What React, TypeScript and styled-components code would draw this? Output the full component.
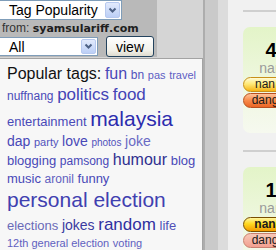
import styled, { createGlobalStyle } from "styled-components";

const GlobalStyle = createGlobalStyle`
  html, body {
    margin: 0;
    padding: 0;
  }
  body {
    background: #f1f1f1;
    font-family: "Liberation Sans", Arial, sans-serif;
    overflow: hidden;
  }
`;

type Tag = { text: string; size: number; color: string };

const TAGS: Tag[] = [
  { text: "fun", size: 16, color: "#4848b8" },
  { text: "bn", size: 12, color: "#5252bc" },
  { text: "pas", size: 11, color: "#5e5ec4" },
  { text: "travel", size: 11, color: "#5e5ec4" },
  { text: "nuffnang", size: 12, color: "#4a4ab8" },
  { text: "politics", size: 17, color: "#4444b6" },
  { text: "food", size: 17, color: "#4444b6" },
  { text: "entertainment", size: 13, color: "#4a4ab8" },
  { text: "malaysia", size: 21, color: "#2c2cae" },
  { text: "dap", size: 14, color: "#4848b8" },
  { text: "party", size: 11, color: "#5252bc" },
  { text: "love", size: 14, color: "#4848b8" },
  { text: "photos", size: 10, color: "#5252bc" },
  { text: "joke", size: 14, color: "#6a6ac4" },
  { text: "blogging", size: 13, color: "#4848b8" },
  { text: "pamsong", size: 12, color: "#4848b8" },
  { text: "humour", size: 16, color: "#30308f" },
  { text: "blog", size: 13, color: "#4848b8" },
  { text: "music", size: 13, color: "#4848b8" },
  { text: "aronil", size: 12, color: "#6060c0" },
  { text: "funny", size: 13, color: "#4848b8" },
  { text: "personal election", size: 21, color: "#4040b0" },
  { text: "elections", size: 13, color: "#6a6ab8" },
  { text: "jokes", size: 14, color: "#3a3aa0" },
  { text: "random", size: 17, color: "#3030a0" },
  { text: "life", size: 13, color: "#5050b8" },
  { text: "12th general election", size: 11, color: "#6060c0" },
  { text: "voting", size: 11, color: "#6060c0" },
];

type Ribbon = { text: string; tone: "gold" | "orange" | "bright" | "pink" };
type Entry = { count: string; label: string; ribbons: Ribbon[] };

const ENTRIES: Entry[] = [
  {
    count: "4",
    label: "nan",
    ribbons: [
      { text: "nan", tone: "gold" },
      { text: "dang", tone: "orange" },
    ],
  },
  {
    count: "1",
    label: "nan",
    ribbons: [
      { text: "nan", tone: "bright" },
      { text: "dang", tone: "pink" },
    ],
  },
];

const Chevron = () => (
  <svg width="9" height="7" viewBox="0 0 9 7">
    <path d="M1.5 1.5 L4.5 4.5 L7.5 1.5" fill="none" stroke="#4d6185" strokeWidth="2" />
  </svg>
);

const App = () => {
  return (
    <Page>
      <GlobalStyle />
      <Sidebar>
        <FilterBox>
          <SelectBox $width={122} $height={20}>
            <SelectText>Tag Popularity</SelectText>
            <ArrowBtn>
              <Chevron />
            </ArrowBtn>
          </SelectBox>
          <FromLine>
            from: <Domain>syamsulariff.com</Domain>
          </FromLine>
          <FilterRow>
            <SelectBox $width={98} $height={19}>
              <SelectText>All</SelectText>
              <ArrowBtn>
                <Chevron />
              </ArrowBtn>
            </SelectBox>
            <ViewButton type="button">view</ViewButton>
          </FilterRow>
        </FilterBox>
        <TagPanel>
          <Heading>Popular tags:</Heading>{" "}
          {TAGS.map((tag) => (
            <span key={tag.text}>
              <TagLink $size={tag.size} $color={tag.color}>
                {tag.text}
              </TagLink>{" "}
            </span>
          ))}
        </TagPanel>
      </Sidebar>
      <Gutter />
      <Main>
        {ENTRIES.map((entry, i) => (
          <Item key={i}>
            <Divider />
            <Card>
              <CardHead>
                <Count>{entry.count}</Count>
                <Label>{entry.label}</Label>
              </CardHead>
              {entry.ribbons.map((r) => (
                <RibbonTag key={r.text} $tone={r.tone}>
                  {r.text}
                </RibbonTag>
              ))}
            </Card>
          </Item>
        ))}
      </Main>
    </Page>
  );
};

export default App;

const Page = styled.div`
  display: flex;
  height: 250px;
  overflow: hidden;
  background: #f1f1f1;
`;

const Sidebar = styled.aside`
  width: 203px;
  flex-shrink: 0;
  display: flex;
  flex-direction: column;
  background: #d5d5d5;
`;

const FilterBox = styled.div`
  width: 157px;
  height: 61px;
  background: #b9b9b9;
  display: flex;
  flex-direction: column;
`;

const SelectBox = styled.div<{ $width: number; $height: number }>`
  display: flex;
  align-items: center;
  width: ${(p) => p.$width}px;
  height: ${(p) => p.$height}px;
  box-sizing: border-box;
  background: #fff;
  border: 1px solid #7f9db9;
  border-left: none;
  padding-left: 9px;
  font-size: 14px;
  color: #000;
`;

const SelectText = styled.span`
  flex: 1;
  white-space: nowrap;
`;

const ArrowBtn = styled.span`
  display: flex;
  align-items: center;
  justify-content: center;
  width: 15px;
  height: calc(100% - 2px);
  margin-right: 1px;
  box-sizing: border-box;
  border: 1px solid #b7c9ef;
  border-radius: 2px;
  background: linear-gradient(#e2eafc, #bccff6);
`;

const FromLine = styled.div`
  height: 16px;
  line-height: 16px;
  padding-left: 2px;
  font-size: 12px;
  color: #333;
  white-space: nowrap;
`;

const Domain = styled.span`
  font-family: "DejaVu Sans", Verdana, sans-serif;
  font-weight: bold;
  font-size: 11px;
  color: #1e1e1e;
`;

const FilterRow = styled.div`
  display: flex;
  align-items: center;
  gap: 8px;
  height: 21px;
`;

const ViewButton = styled.button`
  width: 48px;
  height: 21px;
  padding: 0;
  border: 1px solid #24435e;
  border-radius: 3px;
  background: linear-gradient(#ffffff, #f2f1ea 70%, #dedbcf);
  font-family: "Liberation Sans", Arial, sans-serif;
  font-size: 14px;
  color: #000;
`;

const TagPanel = styled.div`
  flex: 1;
  margin-top: 1px;
  box-sizing: border-box;
  border: 1px solid #a3a3a3;
  border-left: none;
  background: #f7f7f7;
  padding: 5px 3px 0 7px;
  line-height: 1.27;
  font-size: 13px;
`;

const Heading = styled.span`
  font-size: 16px;
  color: #111;
`;

const TagLink = styled.a<{ $size: number; $color: string }>`
  font-size: ${(p) => p.$size}px;
  color: ${(p) => p.$color};
  text-decoration: none;
  white-space: nowrap;
`;

const Gutter = styled.div`
  width: 25px;
  flex-shrink: 0;
  background: linear-gradient(
    to right,
    #adadad 0 2px,
    #cacaca 2px 15px,
    #dcdcdc 15px 25px
  );
`;

const Main = styled.main`
  flex: 1;
  padding: 10px 0 0 15px;
  overflow: hidden;
`;

const Item = styled.section`
  height: 140px;
`;

const Divider = styled.div`
  height: 2px;
  background: #cfcfcf;
`;

const Card = styled.div`
  width: 66px;
  height: 106px;
  margin-top: 15px;
  padding-top: 12px;
  box-sizing: border-box;
  border-radius: 7px 0 0 7px;
  background: linear-gradient(#e3f4c8, #eef7de 50%, #f6f9ef);
`;

const CardHead = styled.div`
  width: 56px;
  text-align: center;
`;

const Count = styled.div`
  font-size: 20px;
  font-weight: bold;
  line-height: 22px;
  color: #000;
`;

const Label = styled.div`
  font-size: 14px;
  line-height: 15px;
  color: #9a9a9a;
`;

const TONES = {
  gold: {
    bg: "linear-gradient(#fffbd6, #ffe978 45%, #f6b416)",
    border: "#c8901a",
    weight: "normal",
  },
  orange: {
    bg: "linear-gradient(#ffc39a, #f88a4a 50%, #ea6626)",
    border: "#b85020",
    weight: "normal",
  },
  bright: {
    bg: "linear-gradient(#fff6a0, #ffd820 45%, #f39a00)",
    border: "#7a4e00",
    weight: "bold",
  },
  pink: {
    bg: "linear-gradient(#f8c8b8, #f2a090)",
    border: "#c98070",
    weight: "normal",
  },
};

const RibbonTag = styled.div<{ $tone: keyof typeof TONES }>`
  width: 44px;
  height: 15px;
  margin-top: 1px;
  box-sizing: border-box;
  border: 1px solid ${(p) => TONES[p.$tone].border};
  border-radius: 8px 0 0 8px;
  background: ${(p) => TONES[p.$tone].bg};
  font-size: 12px;
  line-height: 13px;
  font-weight: ${(p) => TONES[p.$tone].weight};
  text-align: center;
  color: #1a1a1a;
`;
